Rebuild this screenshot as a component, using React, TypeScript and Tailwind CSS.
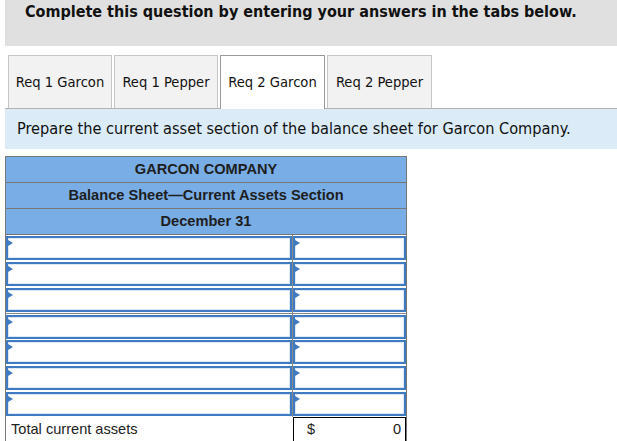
const tabs = [
  { label: "Req 1 Garcon", width: "w-[104px]", active: false },
  { label: "Req 1 Pepper", width: "w-[104px]", active: false },
  { label: "Req 2 Garcon", width: "w-[105px]", active: true },
  { label: "Req 2 Pepper", width: "w-[105px]", active: false },
];

const headerRows = ["GARCON COMPANY", "Balance Sheet\u2014Current Assets Section", "December 31"];

function InputBox() {
  return (
    <div className="relative h-[24px] mt-px border-2 border-[#3f7bc1] bg-white shadow-[inset_0_0_0_1px_#dce8f6]">
      <div className="absolute left-0 top-[2px] w-0 h-0 border-y-[3px] border-y-transparent border-l-[5px] border-l-[#3f7bc1]" />
    </div>
  );
}

export default function App() {
  return (
    <div
      className="w-[617px] h-[441px] overflow-hidden bg-white pl-[5px] text-[#111]"
      style={{ fontFamily: '"DejaVu Sans Condensed", Tahoma, "DejaVu Sans", sans-serif' }}
    >
      <div className="h-[46px] bg-[#e0e0e0] pl-[20px] pt-[2px] text-[16px] leading-[20px] font-bold">
        Complete this question by entering your answers in the tabs below.
      </div>

      <div className="flex items-end gap-[2px] pl-[3px] mt-[9px] border-b border-[#b3b3b3]">
        {tabs.map((t) => (
          <div
            key={t.label}
            className={
              t.active
                ? t.width + " h-[54px] -mb-px pb-px flex items-center justify-center bg-white border border-b-0 border-[#9a9a9a] text-[14.6px]"
                : t.width + " h-[53px] flex items-center justify-center bg-[#f2f2f2] border border-b-0 border-[#c6c6c6] text-[14.6px]"
            }
          >
            {t.label}
          </div>
        ))}
      </div>

      <div className="h-[40px] bg-[#dbebf8] pl-[12px] flex items-center text-[16.2px]">
        Prepare the current asset section of the balance sheet for Garcon Company.
      </div>

      <div
        className="mt-[7px] w-[402px] border border-[#777]"
        style={{ fontFamily: '"Liberation Sans", Arial, sans-serif' }}
      >
        {headerRows.map((h) => (
          <div
            key={h}
            className="h-[26px] pt-px flex items-center justify-center bg-[#79ade5] border-b border-[#777] text-[14.6px] font-bold text-[#1e1e1e]"
          >
            {h}
          </div>
        ))}
        {Array.from({ length: 7 }).map((_, i) => (
          <div
            key={i}
            className={"grid grid-cols-[287px_113px] h-[26px] " + (i === 3 ? "border-t border-[#888]" : "")}
          >
            <div className="border-r border-[#888]">
              <InputBox />
            </div>
            <div>
              <InputBox />
            </div>
          </div>
        ))}
        <div className="grid grid-cols-[287px_113px] h-[26px] text-[14.6px] text-[#222]">
          <div className="flex items-center pl-[5px]">Total current assets</div>
          <div className="flex items-center justify-between border border-black pl-[13px] pr-[4px]">
            <span>$</span>
            <span>0</span>
          </div>
        </div>
      </div>
    </div>
  );
}
